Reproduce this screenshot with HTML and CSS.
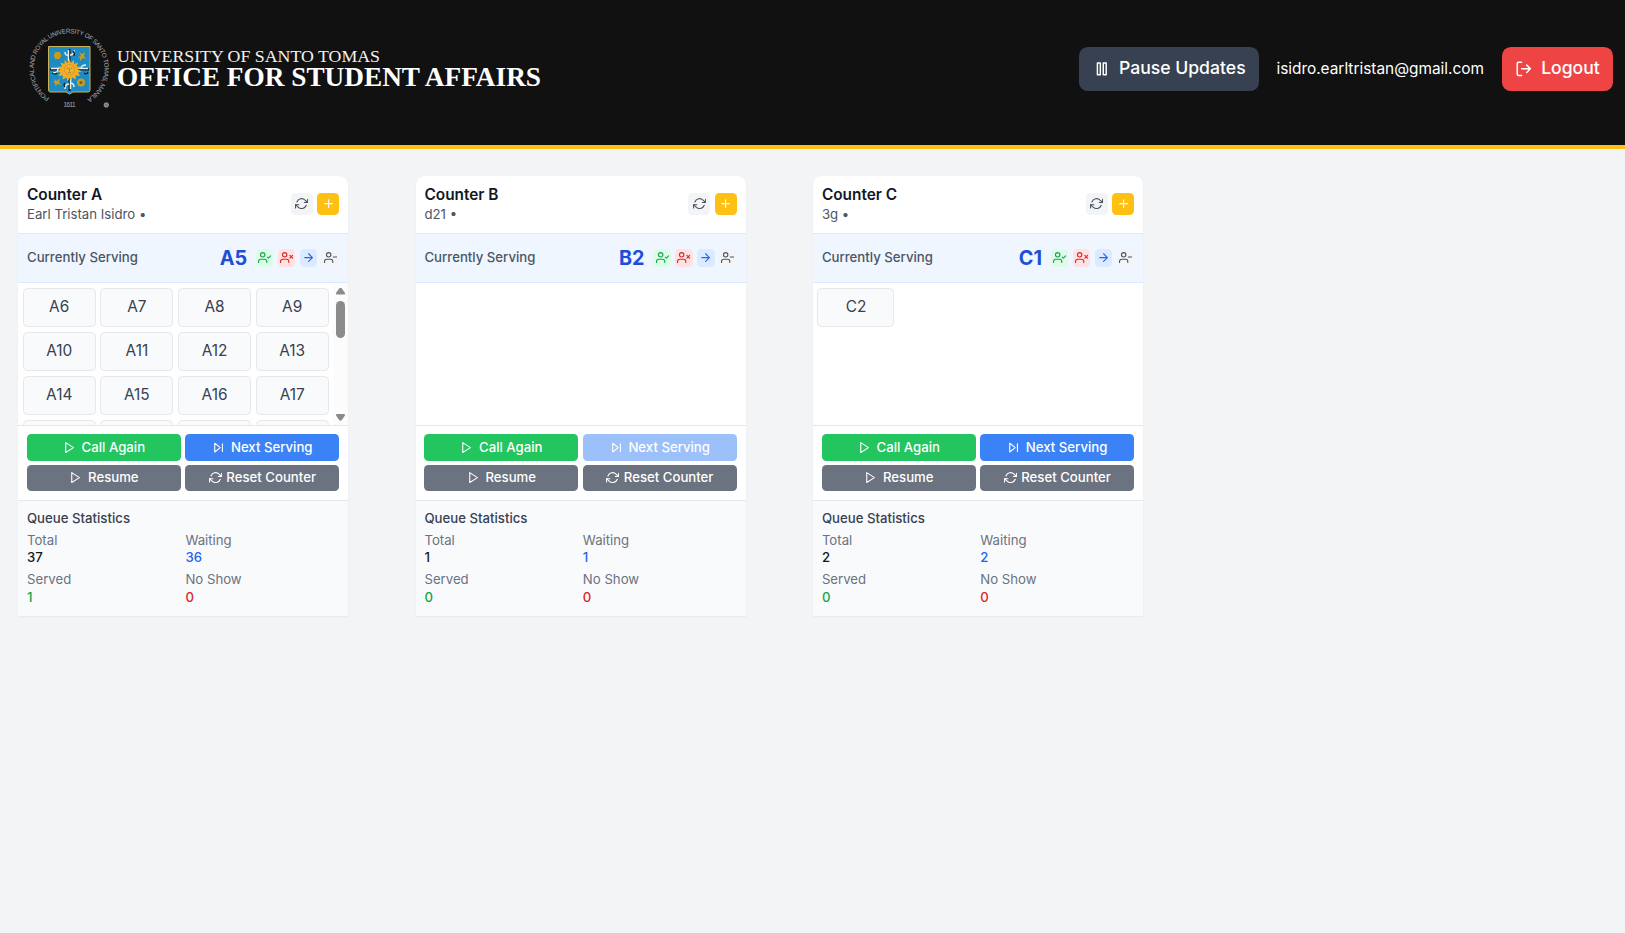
FILE: index.html
```html
<!DOCTYPE html>
<html lang="en">
<head>
<meta charset="utf-8">
<title>Office for Student Affairs</title>
<link rel="stylesheet" href="styles.css">
</head>
<body>
<svg class="sprite" width="0" height="0" aria-hidden="true">
  <symbol id="pause" viewBox="0 0 24 24"><rect x="6" y="4" width="4" height="16"/><rect x="14" y="4" width="4" height="16"/></symbol>
  <symbol id="logout" viewBox="0 0 24 24"><path d="M9 21H5a2 2 0 0 1-2-2V5a2 2 0 0 1 2-2h4M16 17l5-5-5-5M21 12H9"/></symbol>
  <symbol id="refresh" viewBox="0 0 24 24"><path d="M23 4v6h-6M1 20v-6h6"/><path d="M3.51 9a9 9 0 0 1 14.85-3.36L23 10M1 14l4.64 4.36A9 9 0 0 0 20.49 15"/></symbol>
  <symbol id="plus" viewBox="0 0 24 24"><path d="M12 5v14M5 12h14"/></symbol>
  <symbol id="user-check" viewBox="0 0 24 24"><path d="M16 21v-2a4 4 0 0 0-4-4H5a4 4 0 0 0-4 4v2M17 11l2 2 4-4"/><circle cx="8.5" cy="7" r="4"/></symbol>
  <symbol id="user-x" viewBox="0 0 24 24"><path d="M16 21v-2a4 4 0 0 0-4-4H5a4 4 0 0 0-4 4v2M18 8l5 5M23 8l-5 5"/><circle cx="8.5" cy="7" r="4"/></symbol>
  <symbol id="user-minus" viewBox="0 0 24 24"><path d="M16 21v-2a4 4 0 0 0-4-4H5a4 4 0 0 0-4 4v2M23 11h-6"/><circle cx="8.5" cy="7" r="4"/></symbol>
  <symbol id="arrow" viewBox="0 0 24 24"><path d="M5 12h14M12 5l7 7-7 7"/></symbol>
  <symbol id="play" viewBox="0 0 24 24"><path d="M5 3l14 9-14 9z"/></symbol>
  <symbol id="skip" viewBox="0 0 24 24"><path d="M5 4l10 8-10 8zM19 5v14"/></symbol>
</svg>

<header class="topbar">
  <svg class="brand" viewBox="0 0 530 90" role="img" aria-label="University of Santo Tomas Office for Student Affairs">
    <path id="ring" fill="none" d="M29.500 73.900A35.300 35.300 0 1 1 65.500 75.700"/>
    <text class="ring-text"><textPath href="#ring" textLength="182">PONTIFICAL AND ROYAL UNIVERSITY OF SANTO TOMAS, MANILA</textPath></text>
    <text class="ring-text" x="43.500" y="83" textLength="12">1611</text>
    <circle cx="86.300" cy="81" r="2.200" fill="#777" stroke="#aaa" stroke-width=".8"/>
    <path d="M28.500 22.500h41.500v43.500q0 2-2 2H53l-3.500 2-3.500-2H30.500q-2 0-2-2z" fill="#1d8cc4" stroke="#cdb257"/>
    <g transform="translate(0 1)">
      <g fill="none" stroke="#101820" stroke-width="2"><path d="M49.500 24v42M30 44.500h39"/></g>
      <g fill="none" stroke="#e8eef0" stroke-width="1.500"><path d="M48.500 25v11M45 27q0 4 4 3M54 25q0 5-4 5M31 43.500h9M33 48q5 0 5-4M68 43.500h-9M66 40q-5 0-5 4M50.500 64V54M54 62q0-4-4-4M45 64q0-5 4-5"/></g>
      <g fill="none" stroke="#101820" stroke-width="1.200"><path d="M53 26q2 2 1 5M32 48q3 2 5 0M64 48q3 2 4-1M45 62q-2-2 0-4"/></g>
      <g fill="#c99b22"><path d="M35 27h5v7h-5zM34 29h7v3h-7z"/><path d="M59 27l3 2 3-2-1 4 2 3-3-1-3 3v-3l-2-1 3-1z"/><path d="M34 54l3 2 3-3-1 4 2 3-3-1-3 2v-3l-2-1 2-1z"/><circle cx="61" cy="57.500" r="4"/></g>
      <circle cx="61" cy="57.500" r="1.500" fill="#755e20"/>
      <path d="M49.500 34l1.500 4 3-3v4l4-1.500-1.500 4 5 .500-3.500 2.500 4 2-4 1 2 3.500-4.500-.500.500 4-4-2-.500 4-2-3.500-2 3.500-1-4-4 2 .500-4-4.500.500 2-3.500-4-1 4-2-3.500-2.500 5-.500-1.500-4 4 1.500v-4l3 3z" fill="#edae24"/>
      <circle cx="49.500" cy="44.500" r="5" fill="#eeb23a" stroke="#c88a1c" stroke-width=".6"/>
      <path d="M46.700 43.300h1.800M50.500 43.300h1.800M49.500 43.500v2.500M48 47.300h3" stroke="#9a6418" stroke-width=".7"/>
    </g>
    <text class="brand-top" x="97" y="37.700" textLength="263" lengthAdjust="spacingAndGlyphs">UNIVERSITY OF SANTO TOMAS</text>
    <text class="brand-main" x="97" y="61.500" textLength="424" lengthAdjust="spacingAndGlyphs">OFFICE FOR STUDENT AFFAIRS</text>
  </svg>
  <div class="account">
    <button class="top-btn slate"><svg class="icon lg"><use href="#pause"/></svg><span>Pause Updates</span></button>
    <span class="email">isidro.earltristan@gmail.com</span>
    <button class="top-btn red"><svg class="icon lg"><use href="#logout"/></svg><span>Logout</span></button>
  </div>
</header>

<main class="board">
  <section class="card">
    <div class="card-head">
      <div><h2>Counter A</h2><p>Earl Tristan Isidro •</p></div>
      <div class="tools"><button class="sq"><svg class="icon"><use href="#refresh"/></svg></button><button class="sq add"><svg class="icon"><use href="#plus"/></svg></button></div>
    </div>
    <div class="serving">
      <span class="label">Currently Serving</span><strong>A5</strong>
      <div class="tools"><button class="mini ok"><svg class="icon"><use href="#user-check"/></svg></button><button class="mini no"><svg class="icon"><use href="#user-x"/></svg></button><button class="mini go"><svg class="icon"><use href="#arrow"/></svg></button><button class="mini"><svg class="icon"><use href="#user-minus"/></svg></button></div>
    </div>
    <div class="queue">
      <div class="tickets"><span>A6</span><span>A7</span><span>A8</span><span>A9</span><span>A10</span><span>A11</span><span>A12</span><span>A13</span><span>A14</span><span>A15</span><span>A16</span><span>A17</span><span></span><span></span><span></span><span></span></div>
      <svg class="scroll" viewBox="0 0 15 142"><path d="M6.500 5h2l3.500 5q.500 1.500-1 1.500H4q-1.500 0-1-1.500zM6.500 137.500h2l3.500-5q.500-1.500-1-1.500H4q-1.500 0-1 1.500z"/><rect x="3" y="18" width="9" height="37" rx="4.500"/></svg>
    </div>
    <div class="actions">
      <button class="act green"><svg class="icon"><use href="#play"/></svg><span>Call Again</span></button>
      <button class="act blue"><svg class="icon"><use href="#skip"/></svg><span>Next Serving</span></button>
      <button class="act gray"><svg class="icon"><use href="#play"/></svg><span>Resume</span></button>
      <button class="act gray tight"><svg class="icon"><use href="#refresh"/></svg><span>Reset Counter</span></button>
    </div>
    <div class="stats">
      <h3>Queue Statistics</h3>
      <dl><div><dt>Total</dt><dd>37</dd></div><div><dt>Waiting</dt><dd class="c-blue">36</dd></div><div><dt>Served</dt><dd class="c-green">1</dd></div><div><dt>No Show</dt><dd class="c-red">0</dd></div></dl>
    </div>
  </section>

  <section class="card">
    <div class="card-head">
      <div><h2>Counter B</h2><p>d21 •</p></div>
      <div class="tools"><button class="sq"><svg class="icon"><use href="#refresh"/></svg></button><button class="sq add"><svg class="icon"><use href="#plus"/></svg></button></div>
    </div>
    <div class="serving">
      <span class="label">Currently Serving</span><strong>B2</strong>
      <div class="tools"><button class="mini ok"><svg class="icon"><use href="#user-check"/></svg></button><button class="mini no"><svg class="icon"><use href="#user-x"/></svg></button><button class="mini go"><svg class="icon"><use href="#arrow"/></svg></button><button class="mini"><svg class="icon"><use href="#user-minus"/></svg></button></div>
    </div>
    <div class="queue"></div>
    <div class="actions">
      <button class="act green"><svg class="icon"><use href="#play"/></svg><span>Call Again</span></button>
      <button class="act blue" disabled><svg class="icon"><use href="#skip"/></svg><span>Next Serving</span></button>
      <button class="act gray"><svg class="icon"><use href="#play"/></svg><span>Resume</span></button>
      <button class="act gray tight"><svg class="icon"><use href="#refresh"/></svg><span>Reset Counter</span></button>
    </div>
    <div class="stats">
      <h3>Queue Statistics</h3>
      <dl><div><dt>Total</dt><dd>1</dd></div><div><dt>Waiting</dt><dd class="c-blue">1</dd></div><div><dt>Served</dt><dd class="c-green">0</dd></div><div><dt>No Show</dt><dd class="c-red">0</dd></div></dl>
    </div>
  </section>

  <section class="card">
    <div class="card-head">
      <div><h2>Counter C</h2><p>3g •</p></div>
      <div class="tools"><button class="sq"><svg class="icon"><use href="#refresh"/></svg></button><button class="sq add"><svg class="icon"><use href="#plus"/></svg></button></div>
    </div>
    <div class="serving">
      <span class="label">Currently Serving</span><strong>C1</strong>
      <div class="tools"><button class="mini ok"><svg class="icon"><use href="#user-check"/></svg></button><button class="mini no"><svg class="icon"><use href="#user-x"/></svg></button><button class="mini go"><svg class="icon"><use href="#arrow"/></svg></button><button class="mini"><svg class="icon"><use href="#user-minus"/></svg></button></div>
    </div>
    <div class="queue"><div class="tickets"><span>C2</span></div></div>
    <div class="actions">
      <button class="act green"><svg class="icon"><use href="#play"/></svg><span>Call Again</span></button>
      <button class="act blue"><svg class="icon"><use href="#skip"/></svg><span>Next Serving</span></button>
      <button class="act gray"><svg class="icon"><use href="#play"/></svg><span>Resume</span></button>
      <button class="act gray tight"><svg class="icon"><use href="#refresh"/></svg><span>Reset Counter</span></button>
    </div>
    <div class="stats">
      <h3>Queue Statistics</h3>
      <dl><div><dt>Total</dt><dd>2</dd></div><div><dt>Waiting</dt><dd class="c-blue">2</dd></div><div><dt>Served</dt><dd class="c-green">0</dd></div><div><dt>No Show</dt><dd class="c-red">0</dd></div></dl>
    </div>
  </section>
</main>
</body>
</html>
```
FILE: styles.css
```css
* { box-sizing: border-box; margin: 0; padding: 0; }
body { min-height: 100vh; background: #f3f4f6; font-family: Inter, sans-serif; color: #111827; }
button { border: 0; font: inherit; color: inherit; }
.sprite { display: block; height: 0; }

.icon { width: 13.2px; height: 13.2px; flex: none; display: block; fill: none; stroke: currentColor; stroke-width: 2; stroke-linecap: round; stroke-linejoin: round; }
.icon.lg { width: 17.6px; height: 17.6px; }

.topbar { height: 149px; padding: 0 12px 8px 20px; display: flex; align-items: center; justify-content: space-between; background: #111; border-bottom: 4px solid #ffc014; }
.brand { width: 530px; height: 90px; overflow: visible; }
.ring-text { font: 6.4px "Liberation Sans", sans-serif; fill: #aaa; }
.brand-top { font: 17.3px "Liberation Serif", serif; fill: #f2f2f2; }
.brand-main { font: bold 27px "Liberation Serif", serif; fill: #fff; }
.account { display: flex; align-items: center; gap: 17.6px; color: #fff; }
.top-btn { height: 44px; padding: 0 13.2px; display: flex; align-items: center; gap: 8.8px; border-radius: 8.8px; font-size: 17.6px; font-weight: 450; }
.top-btn span { padding-bottom: 2px; }
.slate { background: #374151; }
.red { background: #ef4444; }
.email { font-size: 15.4px; font-weight: 400; }

.board { padding: 27px 17px 27px 18.2px; display: grid; grid-template-columns: repeat(4, 1fr); }
.card { width: 330px; background: #fff; border-radius: 8.8px 8.8px 0 0; box-shadow: 0 1px 2px rgba(0, 0, 0, .05); }
.card-head { height: 58px; padding: 0 8.8px 1px; display: flex; align-items: center; justify-content: space-between; border-bottom: 1px solid #e5e7eb; }
h2 { font-size: 15.4px; line-height: 22px; font-weight: 600; }
.card-head p { font-size: 13.2px; line-height: 17.6px; color: #4b5563; }
.tools { display: flex; gap: 4.4px; }
.sq { width: 22px; height: 22px; display: grid; place-items: center; border-radius: 4.4px; background: #f3f4f6; color: #4b5563; }
.add { background: #ffc014; color: #fff; }

.serving { height: 49px; padding: 0 8.8px; display: flex; align-items: center; gap: 8.8px; background: #eff6ff; border-bottom: 1px solid #dbeafe; }
.label { flex: 1; padding-bottom: 2px; font-size: 13.2px; font-weight: 500; color: #4b5563; }
.serving strong { padding-bottom: 1px; font-size: 19.8px; line-height: 30px; font-weight: 700; color: #1d4ed8; }
.mini { width: 17.6px; height: 17.6px; display: grid; place-items: center; border-radius: 4.4px; background: #f3f4f6; color: #4b5563; }
.ok { background: #dcfce7; color: #16a34a; }
.no { background: #fee2e2; color: #dc2626; }
.go { background: #dbeafe; color: #2563eb; }

.queue { height: 142px; display: flex; overflow: hidden; }
.tickets { flex: 1; padding: 5px 4.4px; display: grid; grid-template-columns: repeat(4, 1fr); grid-auto-rows: 39px; align-content: start; gap: 5px 4.4px; }
.tickets span { display: grid; place-items: center; padding-bottom: 3px; border: 1px solid #e5e7eb; border-radius: 4.4px; background: #f9fafb; color: #374151; font-size: 15.4px; font-weight: 400; }
.scroll { width: 15px; height: 142px; flex: none; background: #fcfcfc; fill: #8b8b8b; }

.actions { height: 76px; padding: 8px 8.8px; display: grid; grid-template-columns: 1fr 1fr; grid-template-rows: 27px 26px; gap: 4px 4.4px; border: solid #e5e7eb; border-width: 1px 0; }
.act { display: flex; align-items: center; justify-content: center; gap: 5.5px; border-radius: 4.4px; color: #fff; font-size: 13.2px; font-weight: 450; }
.act span { padding-bottom: 2px; }
.act.tight { gap: 4.4px; }
.act:disabled { opacity: .5; }
.green { background: #22c55e; }
.blue { background: #3b82f6; }
.gray { background: #6b7280; }

.stats { height: 115px; padding: 8.8px; background: #f9fafb; font-size: 13.2px; line-height: 17.6px; }
h3 { margin-bottom: 4.4px; font-size: 13.2px; font-weight: 500; color: #374151; }
dl { display: grid; grid-template-columns: 1fr 1fr; gap: 4.4px; }
dt { color: #6b7280; }
dd { font-weight: 500; }
.c-blue { color: #2563eb; }
.c-green { color: #16a34a; }
.c-red { color: #dc2626; }
```
